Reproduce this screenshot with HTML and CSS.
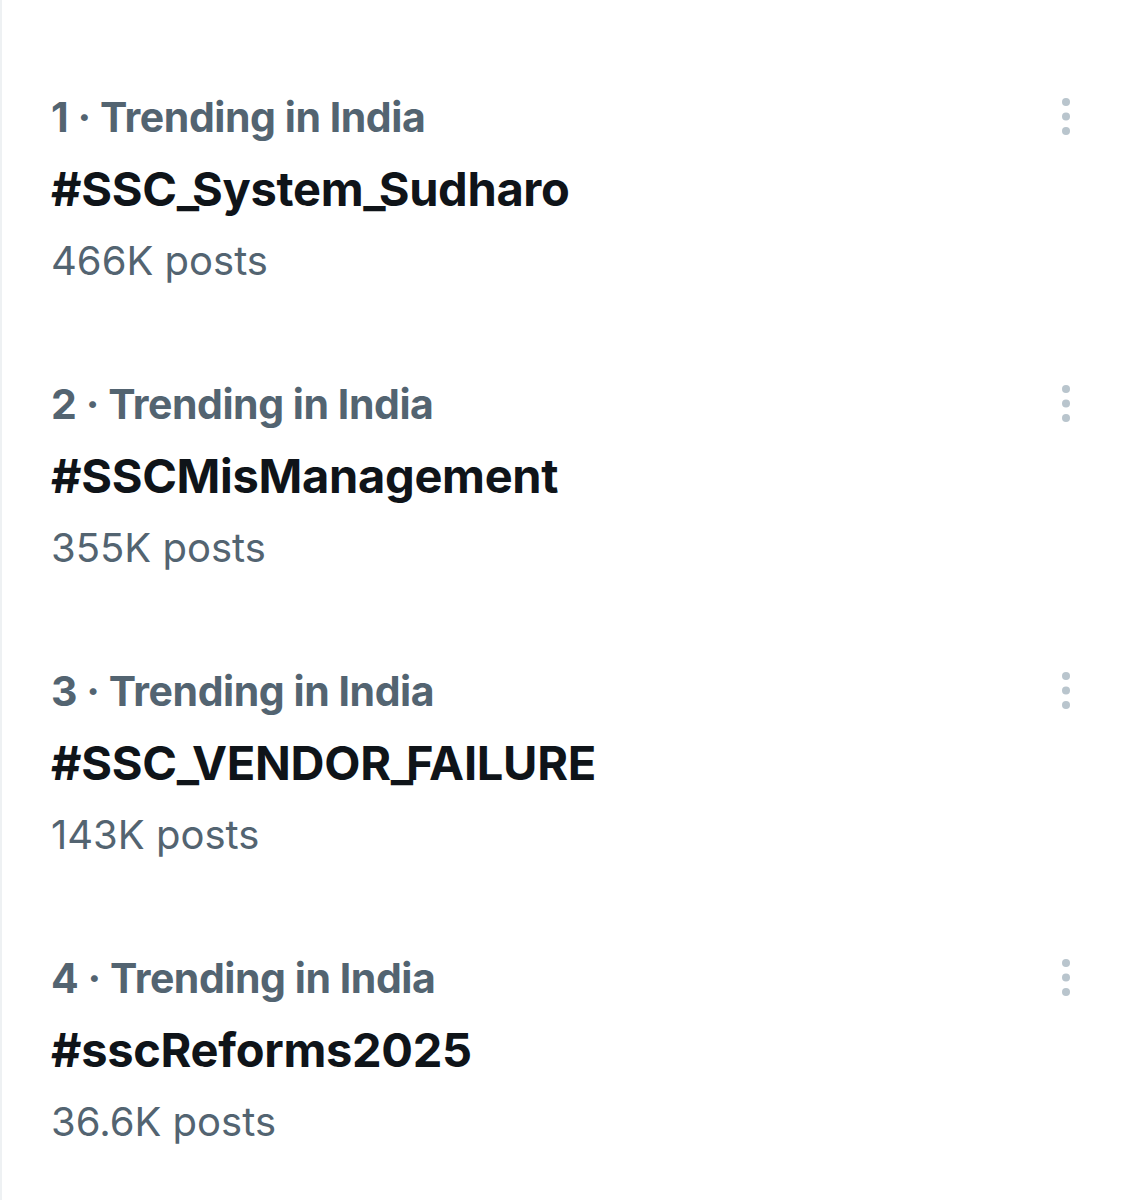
FILE: index.html
```html
<!DOCTYPE html>
<html lang="en">
<head>
<meta charset="utf-8">
<title>Trending</title>
<link rel="stylesheet" href="styles.css">
</head>
<body>
<main class="panel">
  <section class="trend">
    <div class="trend-top">
      <div class="trend-meta">1 · Trending in India</div>
      <svg class="more" viewBox="0 0 10 40" width="10" height="40" aria-hidden="true"><circle cx="5" cy="5" r="4"/><circle cx="5" cy="19.5" r="4"/><circle cx="5" cy="34" r="4"/></svg>
    </div>
    <div class="trend-name">#SSC<span class="us">_</span>System<span class="us">_</span>Sudharo</div>
    <div class="trend-count">466K posts</div>
  </section>
  <section class="trend">
    <div class="trend-top">
      <div class="trend-meta">2 · Trending in India</div>
      <svg class="more" viewBox="0 0 10 40" width="10" height="40" aria-hidden="true"><circle cx="5" cy="5" r="4"/><circle cx="5" cy="19.5" r="4"/><circle cx="5" cy="34" r="4"/></svg>
    </div>
    <div class="trend-name">#SSCMisManagement</div>
    <div class="trend-count">355K posts</div>
  </section>
  <section class="trend">
    <div class="trend-top">
      <div class="trend-meta">3 · Trending in India</div>
      <svg class="more" viewBox="0 0 10 40" width="10" height="40" aria-hidden="true"><circle cx="5" cy="5" r="4"/><circle cx="5" cy="19.5" r="4"/><circle cx="5" cy="34" r="4"/></svg>
    </div>
    <div class="trend-name">#SSC<span class="us">_</span>VENDOR<span class="us">_</span>FAILURE</div>
    <div class="trend-count">143K posts</div>
  </section>
  <section class="trend">
    <div class="trend-top">
      <div class="trend-meta">4 · Trending in India</div>
      <svg class="more" viewBox="0 0 10 40" width="10" height="40" aria-hidden="true"><circle cx="5" cy="5" r="4"/><circle cx="5" cy="19.5" r="4"/><circle cx="5" cy="34" r="4"/></svg>
    </div>
    <div class="trend-name">#sscReforms2025</div>
    <div class="trend-count">36.6K posts</div>
  </section>
</main>
</body>
</html>
```
FILE: styles.css
```css
html, body {
  margin: 0;
  padding: 0;
  background: #ffffff;
}

body {
  font-family: Inter, "Noto Sans", "Liberation Sans", sans-serif;
}

.panel {
  box-sizing: border-box;
  min-height: 1200px;
  border-left: 2px solid #eef1f3;
  padding: 81px 58px 0 49px;
}

.trend {
  padding-bottom: 71px;
}

.trend-top {
  display: flex;
  align-items: center;
  justify-content: space-between;
  height: 72px;
}

.trend-meta {
  font-size: 41px;
  font-weight: 700;
  color: #536471;
  line-height: 72px;
  letter-spacing: -0.45px;
}

.more {
  fill: #b9c5cd;
}

.trend-name {
  font-size: 47px;
  font-weight: 700;
  color: #0f1419;
  line-height: 72px;
  letter-spacing: -0.3px;
}

.trend-name .us {
  letter-spacing: -7px;
}

.trend-count {
  font-size: 40px;
  font-weight: 400;
  color: #536471;
  line-height: 72px;
}
```
